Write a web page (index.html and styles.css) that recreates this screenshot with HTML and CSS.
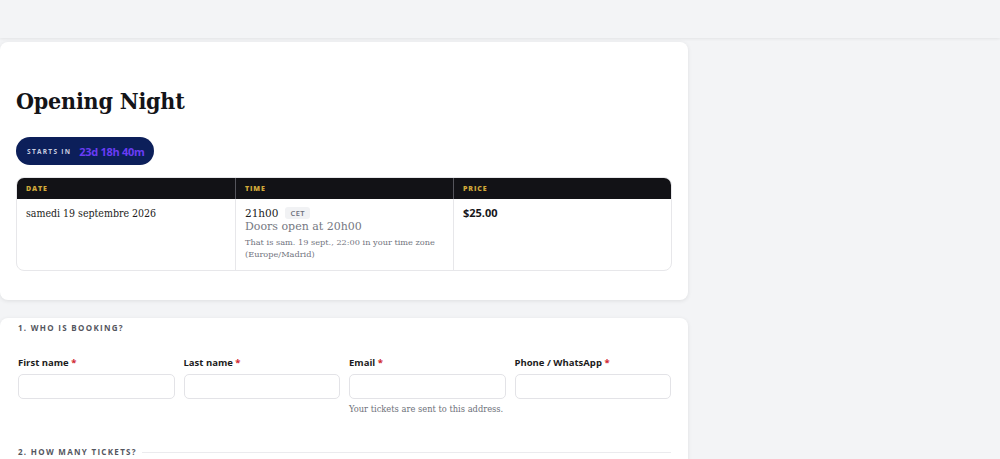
FILE: index.html
```html
<!DOCTYPE html>
<html lang="en">
<head>
<meta charset="utf-8">
<title>Opening Night</title>
<link rel="stylesheet" href="styles.css">
</head>
<body>
<header class="topbar"></header>
<main class="layout">
  <div class="main-col">
    <section class="card event-card">
      <h1 class="event-title">Opening Night</h1>
      <div class="countdown">
        <span class="countdown-label">STARTS IN</span>
        <span class="countdown-value">23d 18h 40m</span>
      </div>
      <div class="info-table">
        <div class="info-head">
          <div class="info-th">DATE</div>
          <div class="info-th">TIME</div>
          <div class="info-th">PRICE</div>
        </div>
        <div class="info-row">
          <div class="info-td">
            <div class="date-text">samedi 19 septembre 2026</div>
          </div>
          <div class="info-td">
            <div class="time-line"><span class="time-text">21h00</span><span class="tz-badge">CET</span></div>
            <div class="doors">Doors open at 20h00</div>
            <div class="local-time">That is sam. 19 sept., 22:00 in your time zone (Europe/Madrid)</div>
          </div>
          <div class="info-td">
            <div class="price">$25.00</div>
          </div>
        </div>
      </div>
    </section>

    <section class="card form-card">
      <h2 class="section-title">1. WHO IS BOOKING?</h2>
      <div class="field-grid">
        <div class="field">
          <label class="field-label">First name <span class="req">*</span></label>
          <input class="field-input" type="text">
        </div>
        <div class="field">
          <label class="field-label">Last name <span class="req">*</span></label>
          <input class="field-input" type="text">
        </div>
        <div class="field">
          <label class="field-label">Email <span class="req">*</span></label>
          <input class="field-input" type="email">
          <div class="field-help">Your tickets are sent to this address.</div>
        </div>
        <div class="field">
          <label class="field-label">Phone / WhatsApp <span class="req">*</span></label>
          <input class="field-input" type="tel">
        </div>
      </div>
      <div class="section-divider">
        <h2 class="section-title">2. HOW MANY TICKETS?</h2>
        <div class="divider-line"></div>
      </div>
    </section>
  </div>
  <aside class="side-col"></aside>
</main>
</body>
</html>
```

FILE: styles.css
```css
* { box-sizing: border-box; }

html, body {
  margin: 0;
  padding: 0;
  background: #f3f4f6;
  font-family: "DejaVu Serif", "Liberation Serif", serif;
  color: #16161a;
  overflow: hidden;
}

.topbar {
  height: 38px;
  background: #f3f4f6;
  box-shadow: 0 1px 3px rgba(0, 0, 0, 0.07);
}

.layout {
  display: flex;
  padding-top: 4px;
}

.main-col {
  width: 688px;
  display: flex;
  flex-direction: column;
  gap: 18px;
}

.card {
  background: #ffffff;
  border-radius: 8px;
  box-shadow: 0 1px 4px rgba(0, 0, 0, 0.09);
}

.event-card {
  padding: 44px 16px 29px;
}

.event-title {
  margin: 0;
  font-size: 23px;
  line-height: 30px;
  font-weight: 700;
  font-stretch: condensed;
  letter-spacing: -0.2px;
  color: #141418;
}

.countdown {
  margin-top: 21px;
  display: inline-flex;
  align-items: center;
  gap: 8px;
  height: 28px;
  padding: 0 10px 0 11px;
  border-radius: 14px;
  background: #0c1f5a;
}

.countdown-label {
  font-family: "Open Sans", "Noto Sans", sans-serif;
  font-size: 6.5px;
  font-weight: 700;
  letter-spacing: 1.3px;
  color: #c9cde0;
}

.countdown-value {
  font-family: "Open Sans", "Noto Sans", sans-serif;
  font-size: 11px;
  font-weight: 700;
  color: #6a3cf5;
  letter-spacing: -0.3px;
}

.info-table {
  margin-top: 12px;
  border: 1px solid #e7e7ea;
  border-radius: 8px;
  overflow: hidden;
}

.info-head,
.info-row {
  display: grid;
  grid-template-columns: 1fr 1fr 1fr;
}

.info-head {
  background: #121216;
  height: 21px;
}

.info-th {
  font-family: "Open Sans", "Noto Sans", sans-serif;
  font-size: 7px;
  font-weight: 800;
  letter-spacing: 0.9px;
  color: #d1a93a;
  padding: 0 9px;
  line-height: 21px;
  border-left: 1px solid #55555c;
}

.info-th:first-child { border-left: none; }

.info-row { min-height: 71px; }

.info-td {
  padding: 7px 9px 8px;
  border-left: 1px solid #e7e7ea;
}

.info-td:first-child { border-left: none; }

.date-text {
  font-size: 10.5px;
  line-height: 14px;
  font-stretch: condensed;
  color: #1c1c22;
}

.time-line {
  display: flex;
  align-items: center;
  gap: 7px;
}

.time-text {
  font-size: 10.5px;
  line-height: 14px;
  color: #1c1c22;
}

.tz-badge {
  font-family: "Open Sans", "Noto Sans", sans-serif;
  font-size: 7.5px;
  font-weight: 600;
  color: #6b6e78;
  background: #f1f2f4;
  border-radius: 3px;
  padding: 1px 5px;
  line-height: 10px;
  letter-spacing: 0.4px;
}

.doors {
  font-size: 11px;
  line-height: 14px;
  color: #757882;
}

.local-time {
  margin-top: 2px;
  font-size: 8.2px;
  line-height: 12px;
  color: #71747e;
}

.price {
  font-family: "Open Sans", "Noto Sans", sans-serif;
  font-size: 11px;
  line-height: 14px;
  font-weight: 700;
  color: #16161a;
}

.form-card {
  padding: 4px 17px 0 18px;
  min-height: 200px;
}

.section-title {
  margin: 0;
  font-family: "Open Sans", "Noto Sans", sans-serif;
  font-size: 8px;
  line-height: 12px;
  font-weight: 700;
  letter-spacing: 1.3px;
  color: #54565e;
  white-space: nowrap;
}

.field-grid {
  margin-top: 23px;
  display: grid;
  grid-template-columns: repeat(4, minmax(0, 1fr));
  gap: 9px;
}

.field {
  display: flex;
  flex-direction: column;
  min-width: 0;
}

.field-label {
  font-family: "Open Sans", "Noto Sans", sans-serif;
  font-size: 9.5px;
  line-height: 12px;
  font-weight: 700;
  color: #1b1b20;
  margin-bottom: 5px;
}

.req { color: #d0262f; }

.field-input {
  width: 100%;
  min-width: 0;
  height: 25px;
  border: 1px solid #e3e3e7;
  border-radius: 5px;
  background: #ffffff;
  margin: 0;
  padding: 0 8px;
}

.field-help {
  margin-top: 5px;
  font-size: 8.3px;
  line-height: 11px;
  color: #6e717a;
}

.section-divider {
  margin-top: 31px;
  display: flex;
  align-items: center;
  gap: 5px;
}

.divider-line {
  flex: 1;
  height: 1px;
  background: #ebebee;
}

.side-col { flex: 1; }
```
